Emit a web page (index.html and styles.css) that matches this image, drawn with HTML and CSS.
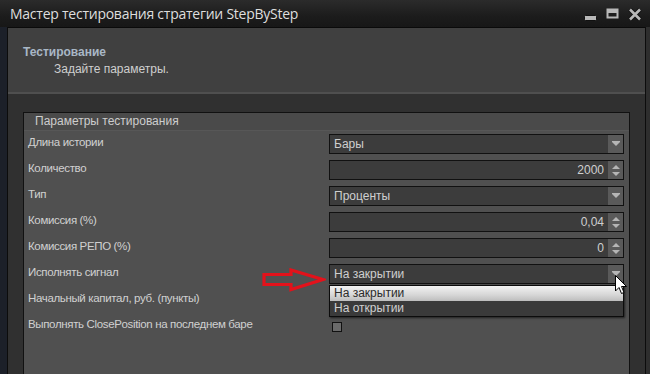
FILE: index.html
```html
<!DOCTYPE html>
<html lang="ru">
<head>
<meta charset="UTF-8">
<meta name="viewport" content="width=device-width, initial-scale=1.0">
<title>Мастер тестирования стратегии StepByStep</title>
<link rel="stylesheet" href="styles.css">
</head>
<body>
<div class="window">
    <div class="titlebar">
        <div class="title">Мастер тестирования стратегии StepByStep</div>
        <div class="win-controls">
            <svg class="btn-min" width="13" height="6" viewBox="0 0 13 6"><rect x="0.5" y="0.5" width="12" height="5" rx="1" fill="#b8b8b8" stroke="#111"/></svg>
            <svg class="btn-max" width="13" height="11" viewBox="0 0 13 11"><rect x="1.5" y="1.5" width="10" height="8" fill="none" stroke="#b8b8b8" stroke-width="2"/><rect x="2" y="2" width="9" height="3" fill="#b8b8b8"/></svg>
            <svg class="btn-close" width="14" height="13" viewBox="0 0 14 13"><path d="M2 1.5 L12 11.5 M12 1.5 L2 11.5" stroke="#111" stroke-width="4.5"/><path d="M2 1.5 L12 11.5 M12 1.5 L2 11.5" stroke="#b8b8b8" stroke-width="2.6"/></svg>
        </div>
    </div>
    <div class="frame">
        <div class="content">
            <div class="header">
                <div class="header-title">Тестирование</div>
                <div class="header-sub">Задайте параметры.</div>
            </div>
            <div class="body">
                <div class="group">
                    <div class="group-title">Параметры тестирования</div>
                    <div class="rows">
                        <div class="label">Длина истории</div>
                        <div class="field select"><span class="value">Бары</span><span class="drop"><i class="tri-down"></i></span></div>

                        <div class="label">Количество</div>
                        <div class="field spin"><span class="value num">2000</span><span class="spinner"><i class="tri-up"></i><i class="tri-down"></i></span></div>

                        <div class="label">Тип</div>
                        <div class="field select"><span class="value">Проценты</span><span class="drop"><i class="tri-down"></i></span></div>

                        <div class="label">Комиссия (%)</div>
                        <div class="field spin"><span class="value num">0,04</span><span class="spinner"><i class="tri-up"></i><i class="tri-down"></i></span></div>

                        <div class="label">Комиссия РЕПО (%)</div>
                        <div class="field spin"><span class="value num">0</span><span class="spinner"><i class="tri-up"></i><i class="tri-down"></i></span></div>

                        <div class="label">Исполнять сигнал</div>
                        <div class="field select open">
                            <span class="value">На закрытии</span><span class="drop"><i class="tri-down"></i></span>
                            <svg class="red-arrow" width="64" height="24" viewBox="0 0 64 24"><path d="M2 6.5 H29 V2 L61 11.5 L29 21.5 V16.5 H2 Z" fill="none" stroke="#e3121b" stroke-width="3.2" stroke-linejoin="miter"/></svg>
                            <div class="dropdown">
                                <div class="option selected">На закрытии</div>
                                <div class="option">На открытии</div>
                            </div>
                            <svg class="cursor" width="13" height="20" viewBox="0 0 13 20"><path d="M0.5 0.5 V16 L4 12.5 L6.5 18.5 L9 17.5 L6.5 11.5 H11.5 Z" fill="#fff" stroke="#000" stroke-width="1"/></svg>
                        </div>

                        <div class="label">Начальный капитал, руб. (пункты)</div>
                        <div class="field spin"><span class="value num">100000</span><span class="spinner"><i class="tri-up"></i><i class="tri-down"></i></span></div>

                        <div class="label">Выполнять ClosePosition на последнем баре</div>
                        <div class="check-cell"><span class="checkbox"></span></div>
                    </div>
                </div>
            </div>
        </div>
    </div>
</div>
</body>
</html>
```

FILE: styles.css
```css
body {
    margin: 0;
    padding: 0;
    font-family: "Liberation Sans", Arial, sans-serif;
    background-color: #2e2e2e;
}

.window {
    width: 650px;
    height: 374px;
    overflow: hidden;
    display: flex;
    flex-direction: column;
    background-color: #2e2e2e;
}

/* title bar */
.titlebar {
    height: 27px;
    flex: none;
    display: flex;
    align-items: center;
    justify-content: space-between;
    background: linear-gradient(#2b2b2b, #1c1c1c 60%, #171717);
}

.title {
    padding-left: 10px;
    font-family: "Open Sans", sans-serif;
    font-size: 14px;
    color: #dedede;
    letter-spacing: -0.25px;
}

.win-controls {
    display: flex;
    align-items: center;
    gap: 9px;
    padding-right: 8px;
}

.btn-min {
    margin-top: 8px;
}

.btn-close {
    margin-top: 1px;
}

/* window frame */
.frame {
    flex: 1;
    display: flex;
    border-left: 7px solid #1c2029;
    min-height: 0;
}

.content {
    flex: 1;
    display: flex;
    flex-direction: column;
    border-left: 1px solid #0c0c0c;
    border-right: 1px solid #0c0c0c;
    margin-right: 4px;
    background-color: #303030;
}

.header {
    height: 67px;
    box-sizing: border-box;
    flex: none;
    background-color: #404040;
    border-top: 1px solid #0a0a0a;
    border-bottom: 2px solid #4f4f4f;
    padding: 17px 0 0 15px;
}

.header-title {
    font-size: 12px;
    font-weight: bold;
    color: #a9b7c6;
    line-height: 15px;
}

.header-sub {
    font-size: 12px;
    color: #cfcfcf;
    line-height: 15px;
    padding-left: 31px;
    margin-top: 2px;
}

.body {
    flex: 1;
    padding: 18px 15px 0 15px;
    min-height: 0;
}

/* group box */
.group {
    height: 400px;
    background-color: #505050;
    border: 1px solid #111;
}

.group-title {
    height: 17px;
    line-height: 17px;
    padding-left: 11px;
    font-size: 12px;
    color: #cdcdcd;
    background-color: #4a4a4a;
    border-bottom: 1px solid #575757;
}

.rows {
    display: grid;
    grid-template-columns: 301px 295px;
    grid-auto-rows: 20px;
    row-gap: 6px;
    padding: 3px 4px 0 4px;
}

.label {
    font-size: 11.5px;
    line-height: 16px;
    letter-spacing: -0.35px;
    color: #d0d0d0;
    white-space: nowrap;
}

/* inputs */
.field {
    position: relative;
    display: flex;
    box-sizing: border-box;
    height: 20px;
    background-color: #3c3c3c;
    border: 1px solid #111;
}

.value {
    flex: 1;
    padding: 0 4px;
    font-size: 12px;
    line-height: 18px;
    color: #cfcfcf;
}

.value.num {
    text-align: right;
    padding-right: 4px;
}

.drop,
.spinner {
    width: 15px;
    flex: none;
    background-color: #5a5a5a;
    display: flex;
    flex-direction: column;
    align-items: center;
    justify-content: center;
    gap: 3px;
}

.tri-down,
.tri-up {
    display: block;
    width: 0;
    height: 0;
    border-left: 4px solid transparent;
    border-right: 4px solid transparent;
}

.tri-down {
    border-top: 4px solid #b5b5b5;
}

.tri-up {
    border-bottom: 4px solid #b5b5b5;
}

.drop .tri-down {
    box-shadow: 0 -1px 0 #b5b5b5;
}

/* open combo */
.red-arrow {
    position: absolute;
    left: -68px;
    top: 3px;
}

.dropdown {
    position: absolute;
    left: -1px;
    right: -1px;
    top: 20px;
    z-index: 2;
    background-color: #3a3a3a;
    border: 1px solid #0c0c0c;
    box-shadow: 1px 1px 2px rgba(0, 0, 0, 0.6);
}

.option {
    height: 15px;
    line-height: 15px;
    padding-left: 4px;
    font-size: 12px;
    color: #cfcfcf;
}

.option.selected {
    background: linear-gradient(#f2f2f2, #d6d6d6 60%, #bdbdbd);
    color: #2b2b2b;
}

.cursor {
    position: absolute;
    right: -5px;
    top: 10px;
    z-index: 3;
}

/* checkbox */
.check-cell {
    padding: 6px 0 0 3px;
}

.checkbox {
    display: block;
    width: 8px;
    height: 8px;
    background-color: #6a6a6a;
    border: 1px solid #111;
}
```
